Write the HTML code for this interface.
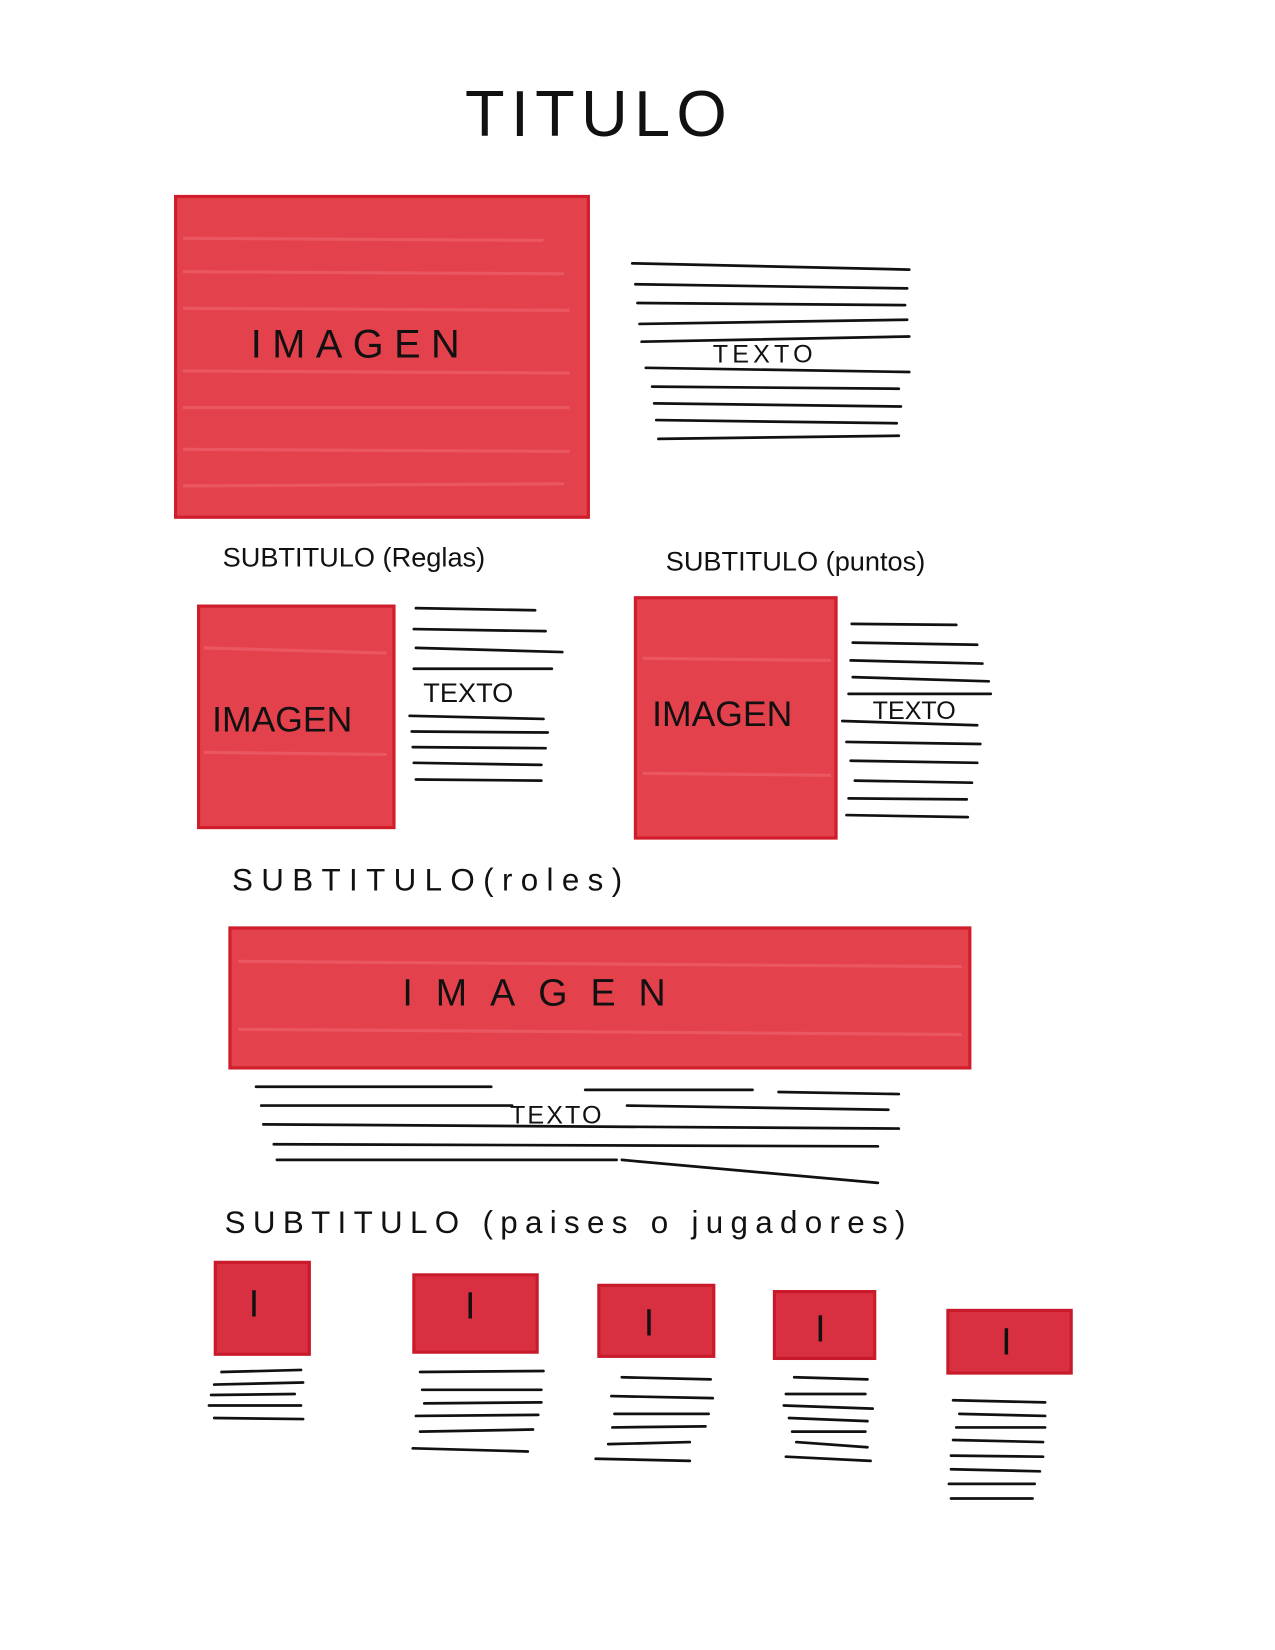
<!DOCTYPE html>
<html><head><meta charset="utf-8"><style>
html,body{margin:0;padding:0;background:#fff;width:1275px;height:1650px;overflow:hidden}
svg{display:block}
text{font-family:"Liberation Sans",sans-serif;fill:#111}
</style></head><body>
<svg width="1275" height="1650" viewBox="0 0 1220 1579" preserveAspectRatio="none" xmlns="http://www.w3.org/2000/svg">
<rect width="1220" height="1579" fill="#fff"/>
<g stroke="#111" stroke-width="2.6" stroke-linecap="round" fill="none">
<!-- top text lines -->
<path d="M605 252 L870 258"/><path d="M608 272 L868 276"/><path d="M610 290 L866 292"/><path d="M612 310 L868 306"/><path d="M614 327 L870 322"/>
<path d="M618 352 L870 356"/><path d="M624 370 L860 372"/><path d="M626 386 L862 389"/><path d="M628 402 L858 405"/><path d="M630 420 L860 417"/>
<!-- reglas lines -->
<path d="M398 582 L512 584"/><path d="M396 602 L522 604"/><path d="M398 620 L538 624"/><path d="M396 640 L528 640"/><path d="M392 685 L520 688"/><path d="M394 700 L524 701"/><path d="M395 715 L522 716"/><path d="M396 730 L518 732"/><path d="M398 746 L518 747"/>
<!-- puntos lines -->
<path d="M815 597 L915 598"/><path d="M816 615 L935 617"/><path d="M814 632 L940 635"/><path d="M816 648 L946 652"/><path d="M812 664 L948 664"/><path d="M806 690 L935 694"/><path d="M810 710 L938 712"/><path d="M814 728 L935 730"/><path d="M818 747 L930 749"/><path d="M812 764 L925 765"/><path d="M810 780 L926 782"/>
<!-- roles lines -->
<path d="M245 1040 L470 1040"/><path d="M560 1043 L720 1043"/><path d="M745 1045 L860 1047"/>
<path d="M250 1058 L490 1058"/><path d="M600 1058 L850 1062"/>
<path d="M252 1076 L860 1080"/><path d="M262 1095 L840 1097"/><path d="M265 1110 L590 1110"/><path d="M595 1110 L840 1132"/>
<!-- small lines -->
<path d="M212 1313 L288 1311"/><path d="M205 1325 L290 1323"/><path d="M202 1335 L282 1334"/><path d="M200 1345 L288 1345"/><path d="M205 1357 L290 1358"/>
<path d="M402 1313 L520 1312"/><path d="M404 1330 L518 1330"/><path d="M406 1343 L518 1342"/><path d="M398 1355 L515 1354"/><path d="M402 1370 L510 1368"/><path d="M395 1386 L505 1389"/>
<path d="M595 1318 L680 1320"/><path d="M585 1336 L682 1338"/><path d="M588 1353 L678 1353"/><path d="M586 1366 L675 1365"/><path d="M582 1382 L660 1380"/><path d="M570 1396 L660 1398"/>
<path d="M760 1318 L830 1320"/><path d="M752 1334 L828 1334"/><path d="M750 1345 L835 1348"/><path d="M755 1357 L830 1360"/><path d="M758 1370 L828 1370"/><path d="M762 1380 L830 1385"/><path d="M752 1394 L833 1398"/>
<path d="M912 1340 L1000 1342"/><path d="M918 1353 L1000 1355"/><path d="M915 1366 L1000 1366"/><path d="M912 1378 L998 1380"/><path d="M910 1393 L998 1394"/><path d="M910 1406 L995 1408"/><path d="M908 1420 L990 1420"/><path d="M910 1434 L988 1434"/>
</g>
<!-- red boxes -->
<g fill="#e3414b" stroke="#cf1d2b" stroke-width="3">
<rect x="168" y="188" width="395" height="307"/>
<rect x="190" y="580" width="187" height="212"/>
<rect x="608" y="572" width="192" height="230"/>
<rect x="220" y="888" width="708" height="134"/>
</g>
<g fill="#d83040" stroke="#c81a2a" stroke-width="3">
<rect x="206" y="1208" width="90" height="88"/>
<rect x="396" y="1220" width="118" height="74"/>
<rect x="573" y="1230" width="110" height="68"/>
<rect x="741" y="1236" width="96" height="64"/>
<rect x="907" y="1254" width="118" height="60"/>
</g>
<!-- streak texture -->
<g stroke="#f06a72" stroke-width="3" opacity="0.55">
<path d="M175 228 L520 230"/><path d="M175 260 L540 262"/><path d="M175 295 L545 297"/><path d="M175 355 L545 357"/><path d="M175 390 L545 390"/><path d="M175 430 L545 432"/><path d="M175 465 L540 463"/>
<path d="M195 620 L370 625"/><path d="M195 720 L370 722"/><path d="M615 630 L795 632"/><path d="M615 740 L795 742"/>
<path d="M228 920 L920 925"/><path d="M228 985 L920 990"/>
</g>
<text x="445" y="130" font-size="62" font-weight="300" letter-spacing="6">TITULO</text>
<text x="240" y="342" font-size="38" letter-spacing="10">IMAGEN</text>
<text x="682" y="347" font-size="24" letter-spacing="4">TEXTO</text>
<text x="213" y="542" font-size="26">SUBTITULO (Reglas)</text>
<text x="637" y="546" font-size="26">SUBTITULO (puntos)</text>
<text x="203" y="700" font-size="34">IMAGEN</text>
<text x="405" y="672" font-size="26">TEXTO</text>
<text x="624" y="695" font-size="34">IMAGEN</text>
<text x="835" y="688" font-size="24">TEXTO</text>
<text x="222" y="852" font-size="30" letter-spacing="8">SUBTITULO(roles)</text>
<text x="385" y="962" font-size="36" letter-spacing="22">IMAGEN</text>
<text x="488" y="1075" font-size="24" letter-spacing="2">TEXTO</text>
<text x="215" y="1180" font-size="30" letter-spacing="7">SUBTITULO (paises o jugadores)</text>
<g font-size="36"><text x="238" y="1260">I</text><text x="445" y="1262">I</text><text x="616" y="1278">I</text><text x="780" y="1284">I</text><text x="958" y="1296">I</text></g>
</svg>
</body></html>
